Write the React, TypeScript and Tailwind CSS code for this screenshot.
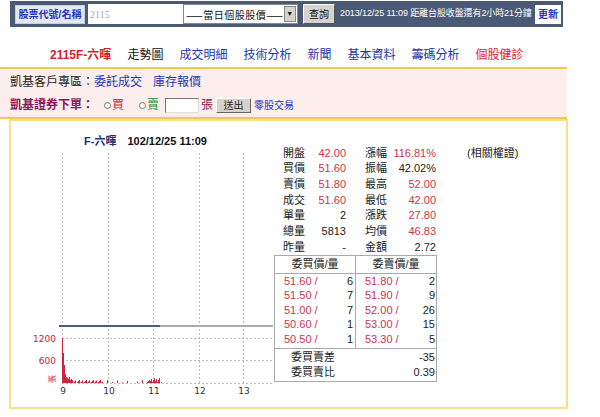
import React from "react";

const stats = [
  ["開盤", "42.00", "漲幅", "116.81%", true, true],
  ["買價", "51.60", "振幅", "42.02%", true, false],
  ["賣價", "51.80", "最高", "52.00", true, true],
  ["成交", "51.60", "最低", "42.00", true, true],
  ["單量", "2", "漲跌", "27.80", false, true],
  ["總量", "5813", "均價", "46.83", false, true],
  ["昨量", "-", "金額", "2.72", false, false],
] as const;

const book = [
  ["51.60", "6", "51.80", "2"],
  ["51.50", "7", "51.90", "9"],
  ["51.00", "7", "52.00", "26"],
  ["50.60", "1", "53.00", "15"],
  ["50.50", "1", "53.30", "5"],
];

const navItems = [
  { t: "2115F-六暉", c: "text-[#d81e2a] font-bold" },
  { t: "走勢圖", c: "text-[#111]" },
  { t: "成交明細", c: "text-[#2233aa]" },
  { t: "技術分析", c: "text-[#2233aa]" },
  { t: "新聞", c: "text-[#2233aa]" },
  { t: "基本資料", c: "text-[#2233aa]" },
  { t: "籌碼分析", c: "text-[#2233aa]" },
  { t: "個股健診", c: "text-[#e0202a]" },
];

function Chart() {
  const grid = [51, 97, 142, 188, 232];
  // volume bars, 1px each from 9:00
  const head = [45, 30, 18, 9, 6, 5, 4, 6, 3, 4];
  let d = "";
  for (let i = 0; i < 100; i++) {
    let h = i < head.length ? head[i] : ((i * 37) % 7) / 2;
    if (i > 40 && i < 85 && (i * 13) % 5 !== 0) h = 0;
    if (i >= 88 && i < 98) h = ((i * 17) % 5) + 1;
    if (h > 0) d += `M${51 + i + 0.5} 235V${235 - h}`;
  }
  return (
    <svg width="263" height="252" className="block">
      {grid.map((x) => (
        <line key={x} x1={x + 0.5} y1="5" x2={x + 0.5} y2="235" stroke="#bbb" strokeDasharray="2 2" />
      ))}
      {[190, 212, 235].map((y) => (
        <line key={y} x1="51" y1={y + 0.5} x2="262" y2={y + 0.5} stroke="#bbb" strokeDasharray="2 2" />
      ))}
      <line x1="149" y1="178" x2="262" y2="178" stroke="#aaa" strokeWidth="2" />
      <line x1="48" y1="178" x2="149" y2="178" stroke="#4a5f7d" strokeWidth="2" />
      <path d={d} stroke="#d0243c" strokeWidth="1" />
      <g fontFamily="DejaVu Sans, sans-serif" fontSize="9">
        <text x="45" y="193.5" textAnchor="end" fill="#cc2244">1200</text>
        <text x="45" y="215.5" textAnchor="end" fill="#cc2244">600</text>
        <text x="41" y="234" textAnchor="middle" fill="#cc2244" fontFamily="Noto Sans CJK TC, sans-serif" fontSize="8" transform="rotate(-90 41 231)">張</text>
        {["9", "10", "11", "12", "13"].map((t, i) => (
          <text key={t} x={grid[i] + 1} y="246" textAnchor="middle" fill="#333">{t}</text>
        ))}
      </g>
    </svg>
  );
}

export default function App() {
  return (
    <div className="w-[600px] h-[417px] bg-white overflow-hidden font-['Liberation_Sans','Noto_Sans_CJK_TC',sans-serif] text-[#222]">

      {/* top search bar */}
      <div className="ml-[10px] mt-[1px] w-[553px] h-[26px] bg-[#4a5a74] flex items-center pl-[5px] pr-[2px]">
        <div className="h-[19px] w-[70px] bg-[#e3e9f4] border border-[#c5cfe0] text-[#1f33c6] text-[10px] font-bold flex items-center justify-center">
          股票代號/名稱
        </div>
        <div className="ml-[3px] h-[20px] w-[95px] bg-white text-[#aaa] text-[10px] font-['Liberation_Serif',serif] pl-[2px] flex items-center">
          2115
        </div>
        <div className="h-[20px] w-[115px] bg-white border border-[#888] flex items-center justify-between pl-[2px]">
          <span className="text-[10px] text-[#111] font-['Noto_Sans_CJK_TC',sans-serif] whitespace-nowrap tracking-[0.5px]">
            ——當日個股股價——
          </span>
          <span className="w-[14px] h-[16px] mr-[1px] bg-[#d6d3cc] border border-[#888] flex items-center justify-center text-[7px] text-[#111]">▼</span>
        </div>
        <div className="ml-[5px] h-[20px] w-[32px] bg-[#d6d3cc] border border-t-[#fff] border-l-[#fff] border-r-[#555] border-b-[#555] text-[10px] text-[#111] flex items-center justify-center">
          查詢
        </div>
        <span className="ml-[5px] text-[9px] text-white tracking-[-0.1px] whitespace-nowrap">
          2013/12/25 11:09 距離台股收盤還有2小時21分鐘
        </span>
        <div className="ml-auto h-[19px] w-[26px] bg-white text-[#1f33c6] text-[10px] font-bold flex items-center justify-center">
          更新
        </div>
      </div>

      {/* nav */}
      <div className="mt-[16px] h-[24px] flex items-center pl-[50px] gap-[16px] text-[12px]">
        {navItems.map((n) => (
          <span key={n.t} className={n.c}>{n.t}</span>
        ))}
      </div>

      {/* pink band */}
      <div className="w-[567px] h-[52px] border-t-2 border-b-2 border-[#f2c94c] bg-[#fdeeee] pl-[10px] pt-[5px] text-[12px]">
        <div className="h-[16px] flex items-center">
          <span>凱基客戶專區：</span>
          <span className="text-[#2233bb]">委託成交</span>
          <span className="ml-[11px] text-[#2233bb]">庫存報價</span>
        </div>
        <div className="mt-[7px] h-[16px] flex items-center">
          <span className="font-bold text-[#8b1a5a] whitespace-nowrap">凱基證券下單：</span>
          <span className="ml-[10px] w-[7px] h-[7px] rounded-full border border-[#777] bg-white" />
          <span className="ml-[1px] text-[#dd2222]">買</span>
          <span className="ml-[15px] w-[7px] h-[7px] rounded-full border border-[#777] bg-white" />
          <span className="ml-[1px] text-[#229933]">賣</span>
          <span className="ml-[6px] w-[34px] h-[15px] bg-white border border-t-[#777] border-l-[#777] border-r-[#ddd] border-b-[#ddd]" />
          <span className="ml-[2px] text-[#8b1a5a]">張</span>
          <span className="ml-[3px] w-[35px] h-[15px] bg-[#d6d3cc] border border-t-[#fff] border-l-[#fff] border-r-[#666] border-b-[#666] text-[10px] flex items-center justify-center">送出</span>
          <span className="ml-[3px] text-[10px] text-[#2233bb]">零股交易</span>
        </div>
      </div>

      {/* main box */}
      <div className="ml-[9px] w-[559px] h-[290px] border-2 border-[#f6e08c] flex">
        <div className="w-[263px]">
          <div className="pt-[13px] h-[27px] pl-[73px] flex items-center gap-[11px] text-[11px] font-bold">
            <span className="text-[#1c2f77]">F-六暉</span>
            <span className="text-[#111]">102/12/25 11:09</span>
          </div>
          <Chart />
        </div>

        <div className="w-[163px] pt-[24px] text-[11px]">
          {stats.map((r) => (
            <div key={r[0]} className="h-[15.67px] flex items-center">
              <div className="ml-[9px] w-[63px] flex justify-between">
                <span>{r[0]}</span>
                <span className={r[4] ? "text-[#cc3350]" : "text-[#222]"}>{r[1]}</span>
              </div>
              <div className="ml-[19px] w-[71px] flex justify-between">
                <span>{r[2]}</span>
                <span className={r[5] ? "text-[#cc3350]" : "text-[#222]"}>{r[3]}</span>
              </div>
            </div>
          ))}

          <div className="w-[163px] border border-[#aaa]">
            <div className="h-[18px] flex border-b border-[#aaa]">
              <div className="w-[81px] border-r border-[#aaa] flex items-center justify-center">委買價/量</div>
              <div className="flex-1 flex items-center justify-center">委賣價/量</div>
            </div>
            <div className="flex border-b border-[#aaa]">
              <div className="w-[81px] border-r border-[#aaa] pb-[2px]">
                {book.map((b) => (
                  <div key={b[0]} className="h-[14.5px] flex items-center justify-between pl-[9px] pr-[2px]">
                    <span className="text-[#cc3350]">{b[0]} /</span>
                    <span>{b[1]}</span>
                  </div>
                ))}
              </div>
              <div className="flex-1 pb-[2px]">
                {book.map((b) => (
                  <div key={b[2]} className="h-[14.5px] flex items-center justify-between pl-[9px] pr-[1px]">
                    <span className="text-[#cc3350]">{b[2]} /</span>
                    <span>{b[3]}</span>
                  </div>
                ))}
              </div>
            </div>
            <div className="py-[1px]">
              <div className="h-[15px] flex items-center justify-between pl-[16px] pr-[1px]">
                <span>委買賣差</span>
                <span>-35</span>
              </div>
              <div className="h-[15px] flex items-center justify-between pl-[16px] pr-[1px]">
                <span>委買賣比</span>
                <span>0.39</span>
              </div>
            </div>
          </div>
        </div>

        <div className="pl-[30px] pt-[24px] text-[11px]">
          <div className="h-[15.67px] flex items-center">(相關權證)</div>
        </div>
      </div>
    </div>
  );
}
